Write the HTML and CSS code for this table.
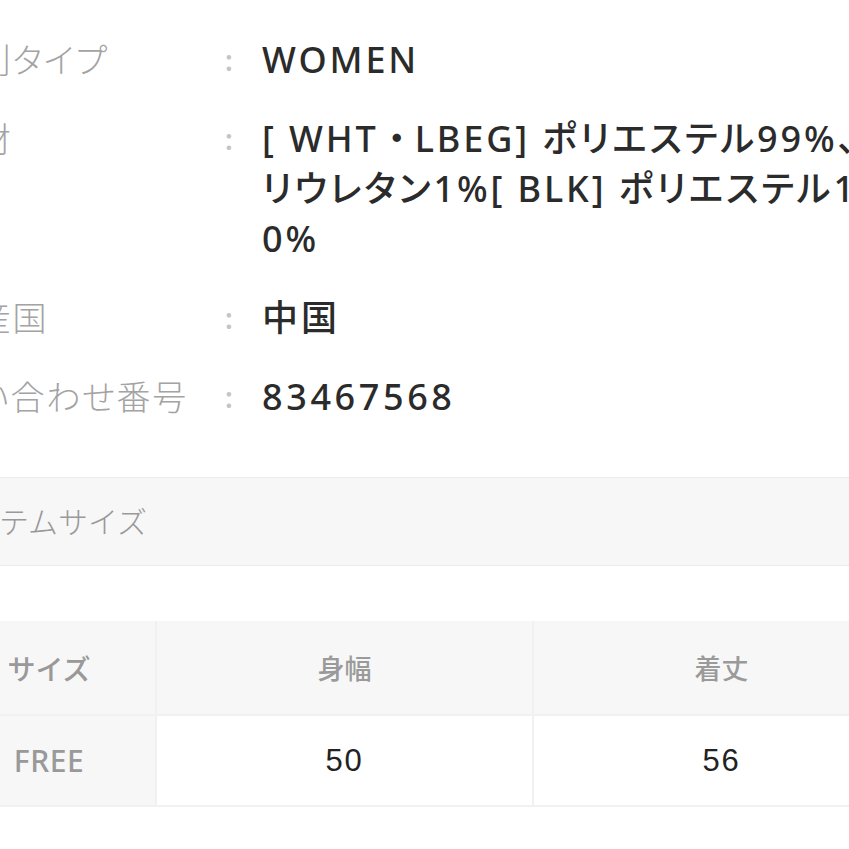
FILE: index.html
```html
<!DOCTYPE html>
<html lang="ja">
<head>
<meta charset="utf-8">
<link rel="stylesheet" href="styles.css">
</head>
<body>
<div class="page">
  <dl class="spec">
    <dt>性別タイプ</dt><dd class="colon">:</dd><dd class="val">WOMEN</dd>
    <dt>素材</dt><dd class="colon">:</dd><dd class="val">[ WHT<span class="dot">・</span>LBEG] ポリエステル99%、ポ<br>リウレタン1%[ BLK] ポリエステル10<br>0%</dd>
    <dt>原産国</dt><dd class="colon">:</dd><dd class="val">中国</dd>
    <dt>問い合わせ番号</dt><dd class="colon">:</dd><dd class="val num">83467568</dd>
  </dl>

  <div class="band">アイテムサイズ</div>

  <table class="size">
    <thead>
      <tr><th class="first">サイズ</th><th>身幅</th><th>着丈</th></tr>
    </thead>
    <tbody>
      <tr><th class="first">FREE</th><td>50</td><td>56</td></tr>
    </tbody>
  </table>
</div>
</body>
</html>
```

FILE: styles.css
```css
html, body {
  margin: 0;
  padding: 0;
  background: #fff;
  overflow: hidden;
}

.page {
  width: 849px;
  height: 849px;
  overflow: hidden;
  font-family: "Noto Sans", "Noto Sans CJK JP", sans-serif;
}

.spec {
  margin: 35px 0 0 -59px;
  display: grid;
  grid-template-columns: 284px 37px max-content;
  row-gap: 29px;
  line-height: 50px;
  font-size: 34px;
}

.spec dt {
  margin: 0;
  color: #a3a3a3;
  font-weight: 300;
  font-feature-settings: "palt";
  letter-spacing: 0.05em;
  white-space: nowrap;
}

.spec dd {
  margin: 0;
}

.colon {
  color: #c4c4c4;
  font-size: 28px;
  font-weight: 600;
}

.val {
  color: #2b2b2b;
  font-size: 36px;
  font-weight: 500;
  letter-spacing: 0.08em;
  font-feature-settings: "palt";
  white-space: nowrap;
}

.val.num {
  letter-spacing: 0.1em;
}

.val .dot {
  font-feature-settings: normal;
  letter-spacing: 0;
}

.band {
  margin: 55px 0 0 -59px;
  width: 1000px;
  height: 87px;
  line-height: 87px;
  background: #f7f7f7;
  border-top: 1px solid #ebebeb;
  border-bottom: 1px solid #ebebeb;
  color: #999;
  font-size: 30px;
  font-weight: 300;
}

.size {
  margin: 55px 0 0 -59px;
  border-collapse: collapse;
  table-layout: fixed;
  width: 970px;
}

.size th,
.size td {
  border: 2px solid #f1f1f1;
  text-align: center;
  padding: 0;
}

.size thead th {
  height: 93px;
  background: #f7f7f7;
  border-top: 0;
  color: #9a9a9a;
  font-size: 27px;
  font-weight: 500;
}

.size tbody th,
.size tbody td {
  height: 89px;
}

.size .first {
  width: 212px;
  background: #f7f7f7;
  color: #999;
  font-size: 28px;
  font-weight: 500;
}

.size tbody th.first {
  font-family: "Noto Sans", sans-serif;
  font-size: 30px;
  letter-spacing: 0.02em;
}

.size td {
  background: #fff;
  color: #222;
  font-family: "Liberation Sans", sans-serif;
  font-size: 31px;
  letter-spacing: 0.06em;
}
```
